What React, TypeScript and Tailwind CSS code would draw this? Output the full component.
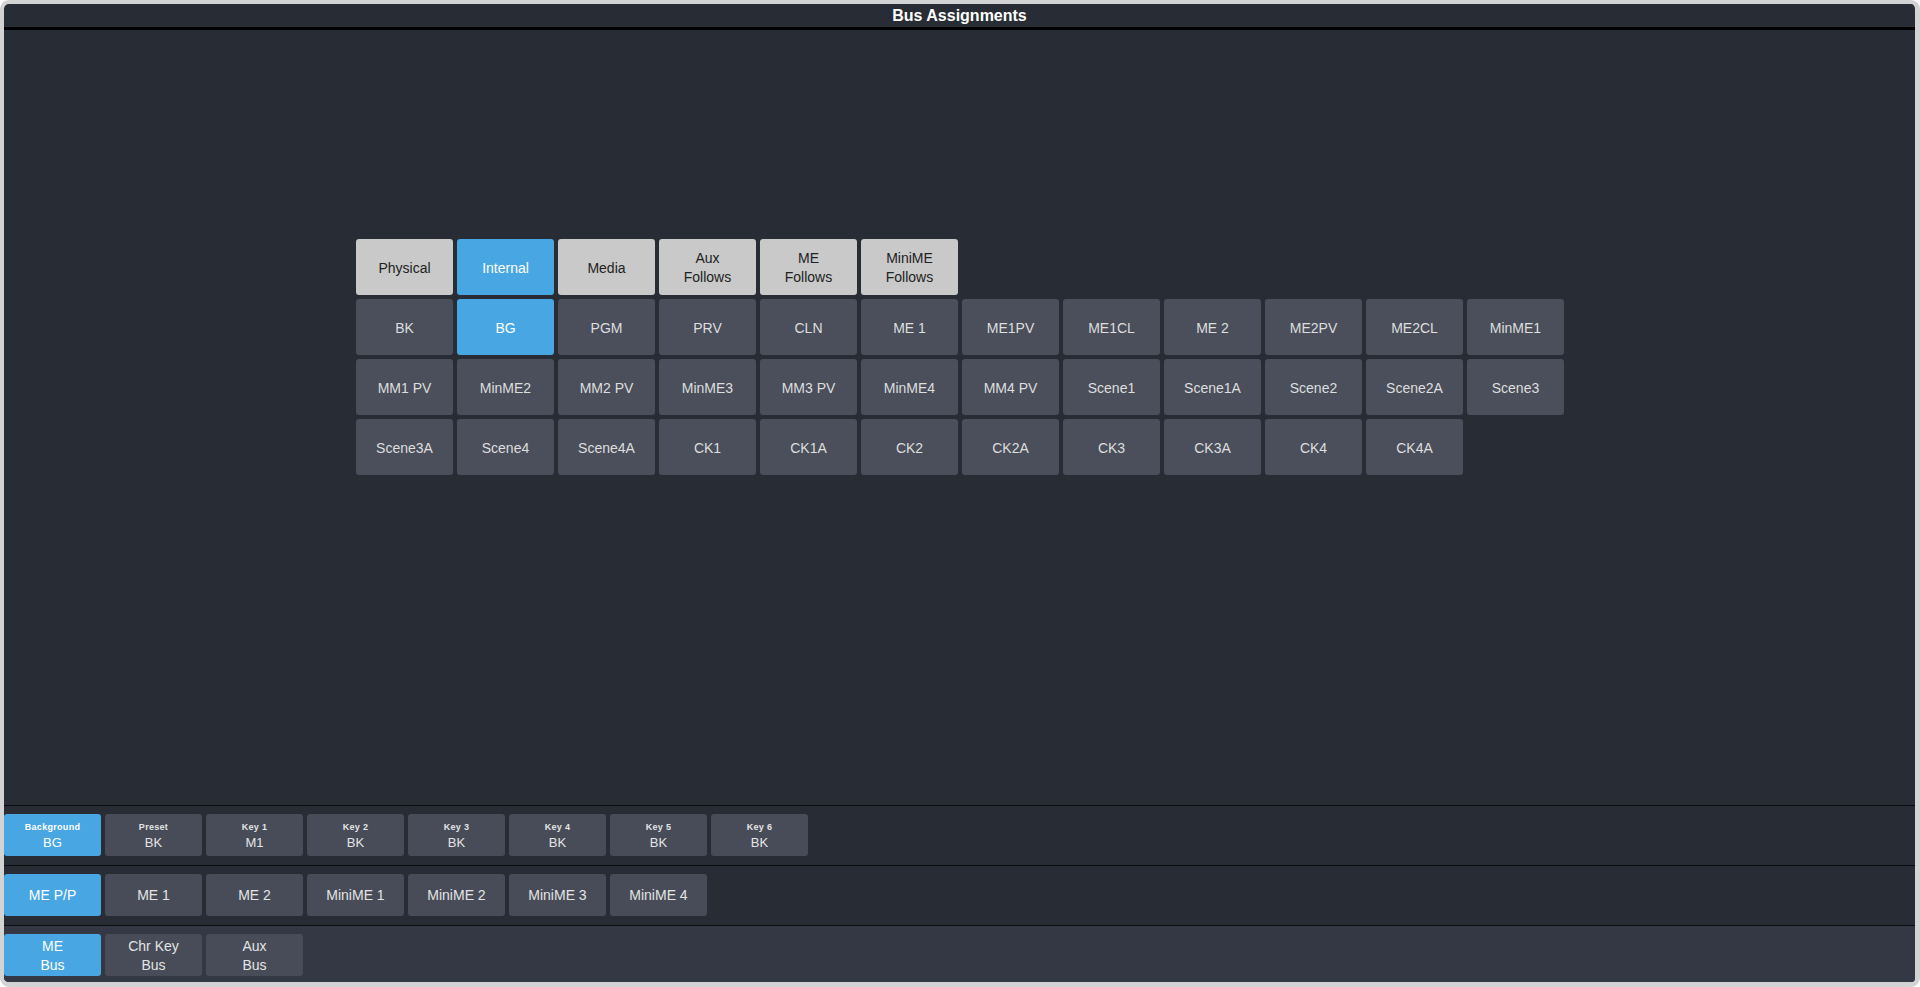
const tabs = [
  { label: ["Physical"] },
  { label: ["Internal"], active: true },
  { label: ["Media"] },
  { label: ["Aux", "Follows"] },
  { label: ["ME", "Follows"] },
  { label: ["MiniME", "Follows"] },
]

const sources = [
  "BK", "BG", "PGM", "PRV", "CLN", "ME 1", "ME1PV", "ME1CL", "ME 2", "ME2PV", "ME2CL", "MinME1",
  "MM1 PV", "MinME2", "MM2 PV", "MinME3", "MM3 PV", "MinME4", "MM4 PV", "Scene1", "Scene1A", "Scene2", "Scene2A", "Scene3",
  "Scene3A", "Scene4", "Scene4A", "CK1", "CK1A", "CK2", "CK2A", "CK3", "CK3A", "CK4", "CK4A",
]

const layers = [
  { title: "Background", value: "BG", active: true },
  { title: "Preset", value: "BK" },
  { title: "Key 1", value: "M1" },
  { title: "Key 2", value: "BK" },
  { title: "Key 3", value: "BK" },
  { title: "Key 4", value: "BK" },
  { title: "Key 5", value: "BK" },
  { title: "Key 6", value: "BK" },
]

const mes = ["ME P/P", "ME 1", "ME 2", "MiniME 1", "MiniME 2", "MiniME 3", "MiniME 4"]

const busTypes = [
  { label: ["ME", "Bus"], active: true },
  { label: ["Chr Key", "Bus"] },
  { label: ["Aux", "Bus"] },
]

function Tab({ label, active }: { label: string[]; active?: boolean }) {
  return (
    <button
      className={
        "flex h-[56px] w-[97px] flex-col items-center justify-center rounded-[3px] pt-[2px] text-[14px] leading-[19px] " +
        (active ? "bg-[#48a6e2] text-white" : "bg-[#c9c9c9] text-[#222]")
      }
    >
      {label.map((l) => (
        <span key={l}>{l}</span>
      ))}
    </button>
  )
}

function SourceButton({ label }: { label: string }) {
  const active = label === "BG"
  return (
    <button
      className={
        "flex h-[56px] w-[97px] items-center justify-center rounded-[3px] pt-[2px] text-[14px] " +
        (active ? "bg-[#48a6e2] text-white" : "bg-[#4a4f5b] text-[#dedede]")
      }
    >
      {label}
    </button>
  )
}

function BarButton({ active, children }: { active?: boolean; children: React.ReactNode }) {
  return (
    <button
      className={
        "flex h-[42px] w-[97px] flex-col items-center justify-center rounded-[3px] pt-px text-[14px] leading-[19px] " +
        (active ? "bg-[#48a6e2] text-white" : "bg-[#474c58] text-[#e4e4e4]")
      }
    >
      {children}
    </button>
  )
}

export default function App() {
  return (
    <div className="h-[987px] w-[1920px] bg-white font-['Liberation_Sans',Arial,sans-serif]">
      <div className="flex h-full flex-col overflow-hidden rounded-[9px] border-t-4 border-r-[5px] border-b-[5px] border-l-4 border-[#d3d3d3] bg-[#282c34]">
        <div className="flex h-[23px] items-center justify-center text-[16px] font-bold text-white">
          Bus Assignments
        </div>
        <div className="h-[3px] bg-black" />

        {/* source picker */}
        <div className="flex-1 pt-[209px] pl-[352px]">
          <div className="flex flex-col gap-[4px]">
            <div className="flex gap-[4px]">
              {tabs.map((t) => (
                <Tab key={t.label.join(" ")} label={t.label} active={t.active} />
              ))}
            </div>
            <div className="grid w-[1208px] grid-cols-[repeat(12,97px)] gap-[4px]">
              {sources.map((s) => (
                <SourceButton key={s} label={s} />
              ))}
            </div>
          </div>
        </div>

        {/* bottom bars */}
        <div className="flex gap-[4px] border-t border-[#0b0c0e] pt-2 pb-[9px]">
          {layers.map((l) => (
            <BarButton key={l.title} active={l.active}>
              <span className="text-[9px] leading-[13px] font-bold tracking-[0.3px]">{l.title}</span>
              <span className="text-[13px] leading-[17px]">{l.value}</span>
            </BarButton>
          ))}
        </div>

        <div className="flex gap-[4px] border-t border-[#0b0c0e] pt-2 pb-[9px]">
          {mes.map((m, i) => (
            <BarButton key={m} active={i === 0}>
              {m}
            </BarButton>
          ))}
        </div>

        <div className="flex h-[57px] gap-[4px] border-t border-[#0b0c0e] bg-[#333844] pt-2">
          {busTypes.map((b) => (
            <BarButton key={b.label.join(" ")} active={b.active}>
              {b.label.map((l) => (
                <span key={l}>{l}</span>
              ))}
            </BarButton>
          ))}
        </div>
      </div>
    </div>
  )
}
